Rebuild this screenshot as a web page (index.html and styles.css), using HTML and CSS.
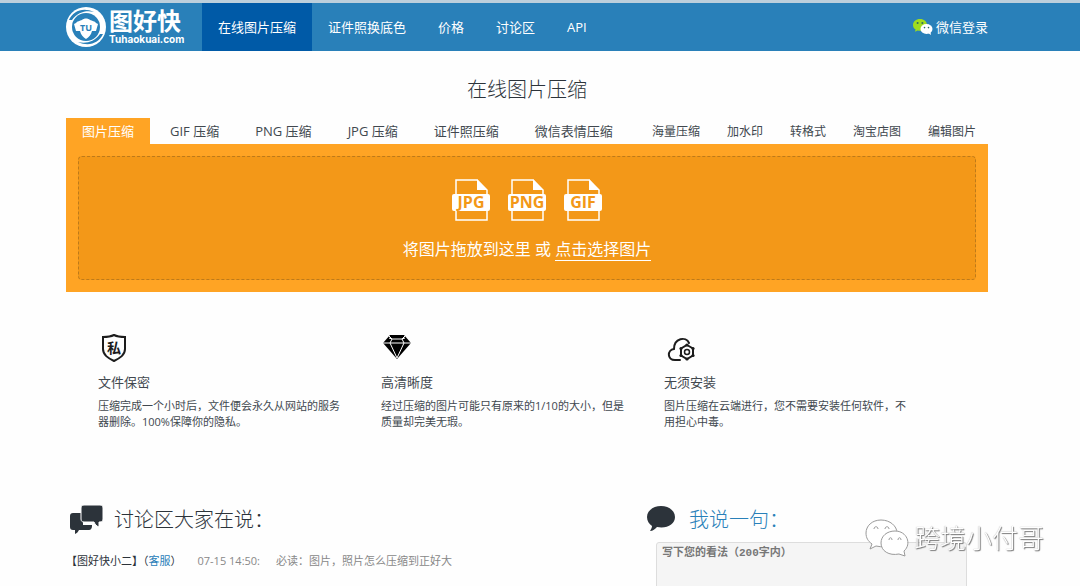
FILE: index.html
```
<!DOCTYPE html>
<html lang="zh-CN">
<head>
<meta charset="UTF-8">
<meta name="viewport" content="width=device-width, initial-scale=1.0">
<title>在线图片压缩 - 图好快</title>
<link rel="stylesheet" href="styles.css">
</head>
<body>

<header class="header">
    <div class="container header-inner">
        <a class="logo" href="#">
            <svg class="logo-mark" viewBox="0 0 40 40" aria-hidden="true">
                <circle cx="20" cy="20" r="20" fill="#fff"/>
                <circle cx="20" cy="20" r="14" fill="#2980b9"/>
                <path d="M3 13C7 4 17 0 28 5C20 3 12 5 6 13M37 27C33 36 23 40 12 35C20 37 28 35 34 27" fill="#2980b9"/>
                <path d="M10 16c1-2 4-2 6-3 2-2 6-2 8 0 2 1 5 1 6 3l2 1-2 7h-4c-1 4-3 6-6 8-3-2-5-4-6-8h-4l-2-7z" fill="#fff"/>
                <text x="20" y="24" text-anchor="middle" class="logo-tu">TU</text>
            </svg>
            <span class="logo-text">
                <span class="logo-name">图好快</span>
                <span class="logo-domain">Tuhaokuai.com</span>
            </span>
        </a>
        <nav class="nav">
            <a class="active" href="#">在线图片压缩</a>
            <a href="#">证件照换底色</a>
            <a href="#">价格</a>
            <a href="#">讨论区</a>
            <a href="#">API</a>
        </nav>
        <a class="login" href="#">
            <svg width="20" height="18" viewBox="0 0 20 18" aria-hidden="true">
                <path d="M7 1C3 1 0 3.600 0 7c0 2 1 3.500 2.600 4.600L2 13.800l2.600-1.300c4.600 1.200 9.400-1.300 9.400-5.500C14 3.600 11 1 7 1z" fill="#a0dc1e"/>
                <ellipse cx="13.500" cy="11" rx="6" ry="5" fill="#fff"/>
                <path d="M15 15l3 2-.5-3z" fill="#fff"/>
                <g fill="#2e6a60"><circle cx="4.600" cy="5" r="1"/><circle cx="9.400" cy="5" r="1"/><circle cx="11.500" cy="9.600" r=".8"/><circle cx="15.500" cy="9.600" r=".8"/></g>
            </svg>
            微信登录
        </a>
    </div>
</header>

<main class="container">
    <h1>在线图片压缩</h1>

    <div class="tabs">
        <a class="tab active" href="#">图片压缩</a>
        <a class="tab" href="#">GIF 压缩</a>
        <a class="tab" href="#">PNG 压缩</a>
        <a class="tab" href="#">JPG 压缩</a>
        <a class="tab" href="#">证件照压缩</a>
        <a class="tab" href="#">微信表情压缩</a>
        <div class="more-tabs">
            <a href="#">海量压缩</a>
            <a href="#">加水印</a>
            <a href="#">转格式</a>
            <a href="#">淘宝店图</a>
            <a href="#">编辑图片</a>
        </div>
    </div>

    <div class="upload">
        <div class="drop-zone">
            <div class="file-icons">
                <svg width="38" height="44" viewBox="0 0 38 44">
                    <path d="M4 17V2h21l10 10v30H4V17" class="file-page"/>
                    <path d="M25 1l10 11H25z" fill="#fff"/>
                    <rect y="16" width="38" height="17" rx="2" fill="#fff"/>
                    <text x="19" y="30" text-anchor="middle" class="file-type">JPG</text>
                </svg>
                <svg width="38" height="44" viewBox="0 0 38 44">
                    <path d="M4 17V2h21l10 10v30H4V17" class="file-page"/>
                    <path d="M25 1l10 11H25z" fill="#fff"/>
                    <rect y="16" width="38" height="17" rx="2" fill="#fff"/>
                    <text x="19" y="30" text-anchor="middle" class="file-type">PNG</text>
                </svg>
                <svg width="38" height="44" viewBox="0 0 38 44">
                    <path d="M4 17V2h21l10 10v30H4V17" class="file-page"/>
                    <path d="M25 1l10 11H25z" fill="#fff"/>
                    <rect y="16" width="38" height="17" rx="2" fill="#fff"/>
                    <text x="19" y="30" text-anchor="middle" class="file-type">GIF</text>
                </svg>
            </div>
            <p>将图片拖放到这里 或 <a href="#">点击选择图片</a></p>
        </div>
    </div>

    <section class="features">
        <div class="feature">
            <svg width="32" height="32" viewBox="0 0 32 32" aria-hidden="true">
                <path d="M16 3c4 2 7 2 11 2v12c0 6-5 9-11 12C10 26 5 23 5 17V5c4 0 7 0 11-2z" fill="none" stroke="#1c1c1c" stroke-width="2"/>
                <text x="16" y="21" text-anchor="middle" class="shield-text">私</text>
            </svg>
            <h3>文件保密</h3>
            <p>压缩完成一个小时后，文件便会永久从网站的服务器删除。100%保障你的隐私。</p>
        </div>
        <div class="feature">
            <svg width="32" height="32" viewBox="0 0 32 32" aria-hidden="true">
                <path d="M9 3h14l7 8-14 16L2 11z" fill="#000"/>
                <path d="M2 11h28M8 6l3 1h10l3-1M8 4l3 3-2 4 7 15 7-15-2-4 3-3" fill="none" stroke="#fff"/>
            </svg>
            <h3>高清晰度</h3>
            <p>经过压缩的图片可能只有原来的1/10的大小，但是质量却完美无瑕。</p>
        </div>
        <div class="feature">
            <svg width="32" height="32" viewBox="0 0 32 32" aria-hidden="true">
                <path d="M16 28h-5c-8 0-8-10-1-11C10 6 22 4 25 11" fill="none" stroke="#1c1c1c" stroke-width="2" stroke-linecap="round"/>
                <path d="M23 13l6 3.500v7L23 27l-6-3.500v-7z" fill="#fff" stroke="#1c1c1c" stroke-width="2"/>
                <circle cx="23" cy="20" r="2.500" fill="none" stroke="#1c1c1c" stroke-width="1.500"/>
                <g fill="#1c1c1c"><circle cx="23" cy="13" r="1.600"/><circle cx="29" cy="16.500" r="1.600"/><circle cx="29" cy="23.500" r="1.600"/><circle cx="23" cy="27" r="1.600"/><circle cx="17" cy="23.500" r="1.600"/><circle cx="17" cy="16.500" r="1.600"/></g>
            </svg>
            <h3>无须安装</h3>
            <p>图片压缩在云端进行，您不需要安装任何软件，不用担心中毒。</p>
        </div>
    </section>

    <div class="community">
        <section class="forum">
            <h2>
                <svg width="40" height="30" viewBox="0 0 40 30" aria-hidden="true">
                    <path d="M7 8h10v12h9v1c0 2-1 4-3 4H13c-1 2-2 3-4 4v-4H7c-2 0-3-1-3-3V11c0-2 1-3 3-3z"/>
                    <path d="M18 0h16c2 0 3 1 3 3v11c0 2-1 3-3 3h-1v5c-3-1-4-3-5-5H18c-2 0-3-1-3-3V3c0-2 1-3 3-3z" stroke="#fff"/>
                </svg>
                讨论区大家在说：
            </h2>
            <p class="post"><span class="author">【图好快小二】（<a href="#">客服</a>）</span><time>07-15 14:50:</time><span>必读：图片，照片怎么压缩到正好大</span></p>
        </section>
        <section class="comment">
            <h2>
                <svg width="28" height="30" viewBox="0 0 28 30" aria-hidden="true">
                    <path d="M14 1C6 1 0 6 0 12c0 4 2 7 5 9 0 2-1 3-2 5 3 0 5-2 7-4 10 2 18-3 18-10C28 6 22 1 14 1z"/>
                </svg>
                <label for="comment">我说一句：</label>
            </h2>
            <textarea id="comment" placeholder="写下您的看法（200字内）"></textarea>
        </section>
    </div>
</main>

<div class="watermark">
    <svg width="44" height="38" viewBox="0 0 44 38" aria-hidden="true">
        <path d="M16 1C7 1 1 7 1 14c0 5 2 8 6 11l-2 5 6-3c12 3 21-4 21-13C32 7 25 1 16 1z"/>
        <path d="M30 12c-8 0-14 5-14 12 0 8 8 13 18 11l6 2-1-5c8-7 3-20-9-20z"/>
        <path d="M9 10c0-3 4-3 4 0M20 10c0-3 4-3 4 0M24 21c0-3 3-3 3 0M33 21c0-3 3-3 3 0"/>
    </svg>
    <span>跨境小付哥</span>
</div>

</body>
</html>
```
FILE: styles.css
```
* {
    box-sizing: border-box;
}
body {
    margin: 0;
    background-color: #fefefe;
    color: #41484f;
    font-family: "Open Sans", "Noto Sans CJK SC", sans-serif;
    font-size: 13px;
    line-height: 20px;
}
a {
    color: inherit;
    text-decoration: none;
}
h1, h2, h3, p {
    margin: 0;
    font-weight: 400;
}
svg {
    flex: none;
}
.container {
    margin: 0 92px 0 66px;
}

/* header */
.header {
    background-color: #2980b9;
    border-top: 3px solid #bccfdc;
    color: #fff;
}
.header-inner {
    display: flex;
    height: 48px;
}
.logo {
    display: flex;
    align-items: center;
    gap: 3px;
    width: 136px;
}
.logo-mark {
    width: 40px;
    height: 40px;
}
.logo-tu {
    fill: #2980b9;
    font-size: 9px;
    font-weight: 700;
}
.logo-text {
    display: flex;
    flex-direction: column;
    font-weight: 700;
}
.logo-name {
    font-size: 24px;
    line-height: 24px;
}
.logo-domain {
    font-family: Inter, sans-serif;
    font-size: 10px;
    line-height: 12px;
}
.nav {
    display: flex;
}
.nav a {
    padding: 14px 16px;
}
.nav a.active {
    background-color: #005aa7;
}
.login {
    display: flex;
    align-items: center;
    gap: 3px;
    margin-left: auto;
}

/* compress box */
h1 {
    padding: 24px 0 13px;
    color: #2c333a;
    font-size: 20px;
    font-weight: 300;
    line-height: 30px;
    text-align: center;
}
.tabs {
    display: flex;
    gap: 4px;
}
.tab {
    padding: 3px 16px;
}
.tab.active {
    background-color: #ffa424;
    color: #fff;
}
.more-tabs {
    display: flex;
    gap: 27px;
    margin-left: auto;
    padding: 4px 12px 2px 0;
    font-size: 12px;
}
.upload {
    padding: 12px;
    background-color: #ffa424;
}
.drop-zone {
    padding: 21px 0 18px;
    background-color: #f39818;
    border: 1px dashed #bd7a1a;
    border-radius: 4px;
    color: #fff;
    text-align: center;
}
.file-icons {
    display: flex;
    justify-content: center;
    gap: 18px;
    margin-bottom: 16px;
}
.file-page {
    fill: none;
    stroke: #fff;
    stroke-width: 1.5;
}
.file-type {
    fill: #f39818;
    font-size: 16px;
    font-weight: 700;
}
.drop-zone p {
    font-size: 16px;
    line-height: 22px;
}
.drop-zone a {
    display: inline-block;
    border-bottom: 1px solid #fff;
}

/* features */
.features {
    display: grid;
    grid-template-columns: repeat(3, 1fr);
    padding: 40px 41px 0 32px;
}
.feature {
    padding-right: 32px;
}
.feature svg {
    display: block;
}
.shield-text {
    fill: #1c1c1c;
    font-size: 14px;
    font-weight: 700;
}
.feature h3 {
    margin: 8px 0 6px;
    font-size: 13px;
}
.feature p {
    font-size: 11px;
    line-height: 16px;
}

/* forum and comment */
.community {
    display: flex;
    justify-content: space-between;
    padding-top: 75px;
}
.community h2 {
    display: flex;
    align-items: center;
    color: #2c333a;
    font-size: 20px;
    font-weight: 300;
    line-height: 30px;
}
.community h2 svg {
    fill: #2c333a;
}
.forum h2 {
    gap: 8px;
}
.comment {
    width: 341px;
}
.community .comment h2 {
    gap: 14px;
    color: #2980b9;
}
.post {
    display: flex;
    gap: 16px;
    margin-top: 16px;
    color: #888;
    font-size: 11px;
}
.author {
    color: #2c333a;
}
.author a {
    color: #2980b9;
}
.comment textarea {
    display: block;
    width: 311px;
    height: 80px;
    margin: 7px 0 0 9px;
    padding: 0 5px;
    background-color: #f5f5f5;
    border: 1px solid #ddd;
    border-radius: 3px;
    font-family: "Liberation Mono", "Noto Sans CJK SC", monospace;
    font-size: 11px;
    font-weight: 700;
    line-height: 20px;
    resize: none;
}
.comment textarea::placeholder {
    color: #777;
}

.watermark {
    position: fixed;
    right: 36px;
    bottom: 28px;
    display: flex;
    align-items: center;
    gap: 5px;
    color: #fff;
    font-size: 26px;
    font-weight: 300;
    line-height: 40px;
    text-shadow: 1px 1px 1px #777, 0 0 1px #999;
}
.watermark svg {
    fill: #fff;
    stroke: #999;
}
```
